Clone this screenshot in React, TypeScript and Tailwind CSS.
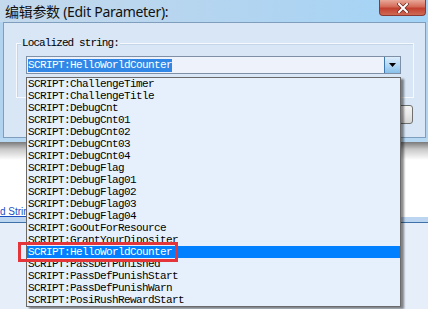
import React from "react";

const items = [
  "SCRIPT:ChallengeTimer",
  "SCRIPT:ChallengeTitle",
  "SCRIPT:DebugCnt",
  "SCRIPT:DebugCnt01",
  "SCRIPT:DebugCnt02",
  "SCRIPT:DebugCnt03",
  "SCRIPT:DebugCnt04",
  "SCRIPT:DebugFlag",
  "SCRIPT:DebugFlag01",
  "SCRIPT:DebugFlag02",
  "SCRIPT:DebugFlag03",
  "SCRIPT:DebugFlag04",
  "SCRIPT:GoOutForResource",
  "SCRIPT:GrantYourDipositer",
  "SCRIPT:HelloWorldCounter",
  "SCRIPT:PassDefPunished",
  "SCRIPT:PassDefPunishStart",
  "SCRIPT:PassDefPunishWarn",
  "SCRIPT:PosiRushRewardStart",
];

const mono = { fontFamily: '"Liberation Mono", monospace' };

export default function App() {
  return (
    <div className="relative w-[428px] h-[309px] overflow-hidden bg-white">
      {/* Dialog */}
      <div className="flex flex-col bg-[#b1d3f0]">
        {/* Title bar */}
        <div className="h-[22px] flex items-start justify-between bg-[linear-gradient(90deg,#c4d9ec_0%,#b6d5ef_45%,#a3d3f6_100%)]">
          <div
            className="pl-[5px] pt-[3px] text-[14px] leading-[17px] tracking-[-0.3px] text-[#111]"
            style={{ fontFamily: '"Noto Sans", "Noto Sans CJK SC", sans-serif' }}
          >
            编辑参数 (Edit Parameter):
          </div>
          <div className="mr-[2px] w-[47px] h-[16px] flex items-center justify-center rounded-b-[4px] border border-t-0 border-[#8a3a32] bg-[linear-gradient(180deg,#e9a898_0%,#d46a58_45%,#c2402f_55%,#cf6a55_100%)]">
            <svg width="12" height="10" viewBox="0 0 12 10">
              <path d="M2 1 L10 9 M10 1 L2 9" stroke="#6b2a22" strokeWidth="3.4" strokeLinecap="square" />
              <path d="M2 1 L10 9 M10 1 L2 9" stroke="#ffffff" strokeWidth="2" strokeLinecap="square" />
            </svg>
          </div>
        </div>
        {/* Panel */}
        <div className="ml-[3px] w-[423px] h-[116px] border border-[#7f9dbd] bg-[#d8e6f5] flex flex-col">
          <div className="relative ml-[12px] mt-[20px] w-[398px] h-[55px] border border-[#f6faff] shadow-[inset_1px_1px_0_#c5d6e8]">
            <div
              className="absolute left-[4px] top-[-7px] px-[1px] bg-[#d8e6f5] text-[11px] leading-[12px] tracking-[-0.9px] text-black"
              style={mono}
            >
              Localized string:
            </div>
            <div className="ml-[9px] mt-[12px] w-[375px] h-[18px] border border-[#7e8fa6] bg-[#eef3fb] flex items-stretch">
              <div className="flex-1 flex items-center pl-[1px]">
                <span
                  className="h-[13px] bg-[#3087e6] text-white text-[11px] leading-[13px] tracking-[-0.6px]"
                  style={mono}
                >
                  SCRIPT:HelloWorldCounter
                </span>
              </div>
              <div className="w-[16px] flex items-center justify-center border-l border-[#3d79ad] bg-[linear-gradient(180deg,#dcedfb_0%,#b4d8f5_50%,#88c0ea_100%)]">
                <svg width="7" height="4" viewBox="0 0 7 4">
                  <path d="M0 0 H7 L3.5 4 Z" fill="#000" />
                </svg>
              </div>
            </div>
          </div>
          <div className="mt-[7px] mr-[12px] self-end w-[80px] h-[19px] rounded-[3px] border border-[#707070] bg-[linear-gradient(180deg,#f4f4f4_0%,#e8e8e8_50%,#d6d6d6_100%)]" />
        </div>
        <div className="h-[4px] bg-[#b7d8f3]" />
      </div>
      {/* shadow below dialog */}
      <div className="h-[18px] bg-[linear-gradient(180deg,#7a7a7a_0%,#c8c8c8_40%,#ffffff_100%)]" />
      {/* white area with link */}
      <div className="h-[57px] bg-white flex items-end">
        <div className="w-[26px] overflow-hidden mb-[-4px]">
          <span
            className="whitespace-nowrap text-[10px] leading-[12px] text-[#1d4fbf] underline"
            style={{ fontFamily: '"Liberation Sans", sans-serif' }}
          >
            d String
          </span>
        </div>
      </div>
      <div className="h-[5px] bg-[#bcd6f2]" />
      <div className="h-[1px] bg-[#3f70a8]" />
      <div className="h-[86px] bg-[#e6eefa]" />

      {/* Dropdown list overlay */}
      <div className="absolute left-[26px] top-[77px] w-[375px] h-[230px] border border-[#6a6a6a] bg-[#e6f0fd] shadow-[3px_2px_2px_rgba(0,0,0,0.45)] flex flex-col">
        {items.map((t, i) => (
          <div
            key={t}
            className={
              i === 14
                ? "h-[12px] pl-[1px] bg-[#0080ff] text-white text-[11px] leading-[12px] tracking-[-0.6px] whitespace-nowrap"
                : "h-[12px] pl-[1px] text-black text-[11px] leading-[12px] tracking-[-0.6px] whitespace-nowrap"
            }
            style={mono}
          >
            {t}
          </div>
        ))}
      </div>

      {/* red annotation box */}
      <div className="absolute left-[18px] top-[242px] w-[160px] h-[20px] border-[3px] border-[#e4353b]" />
    </div>
  );
}
